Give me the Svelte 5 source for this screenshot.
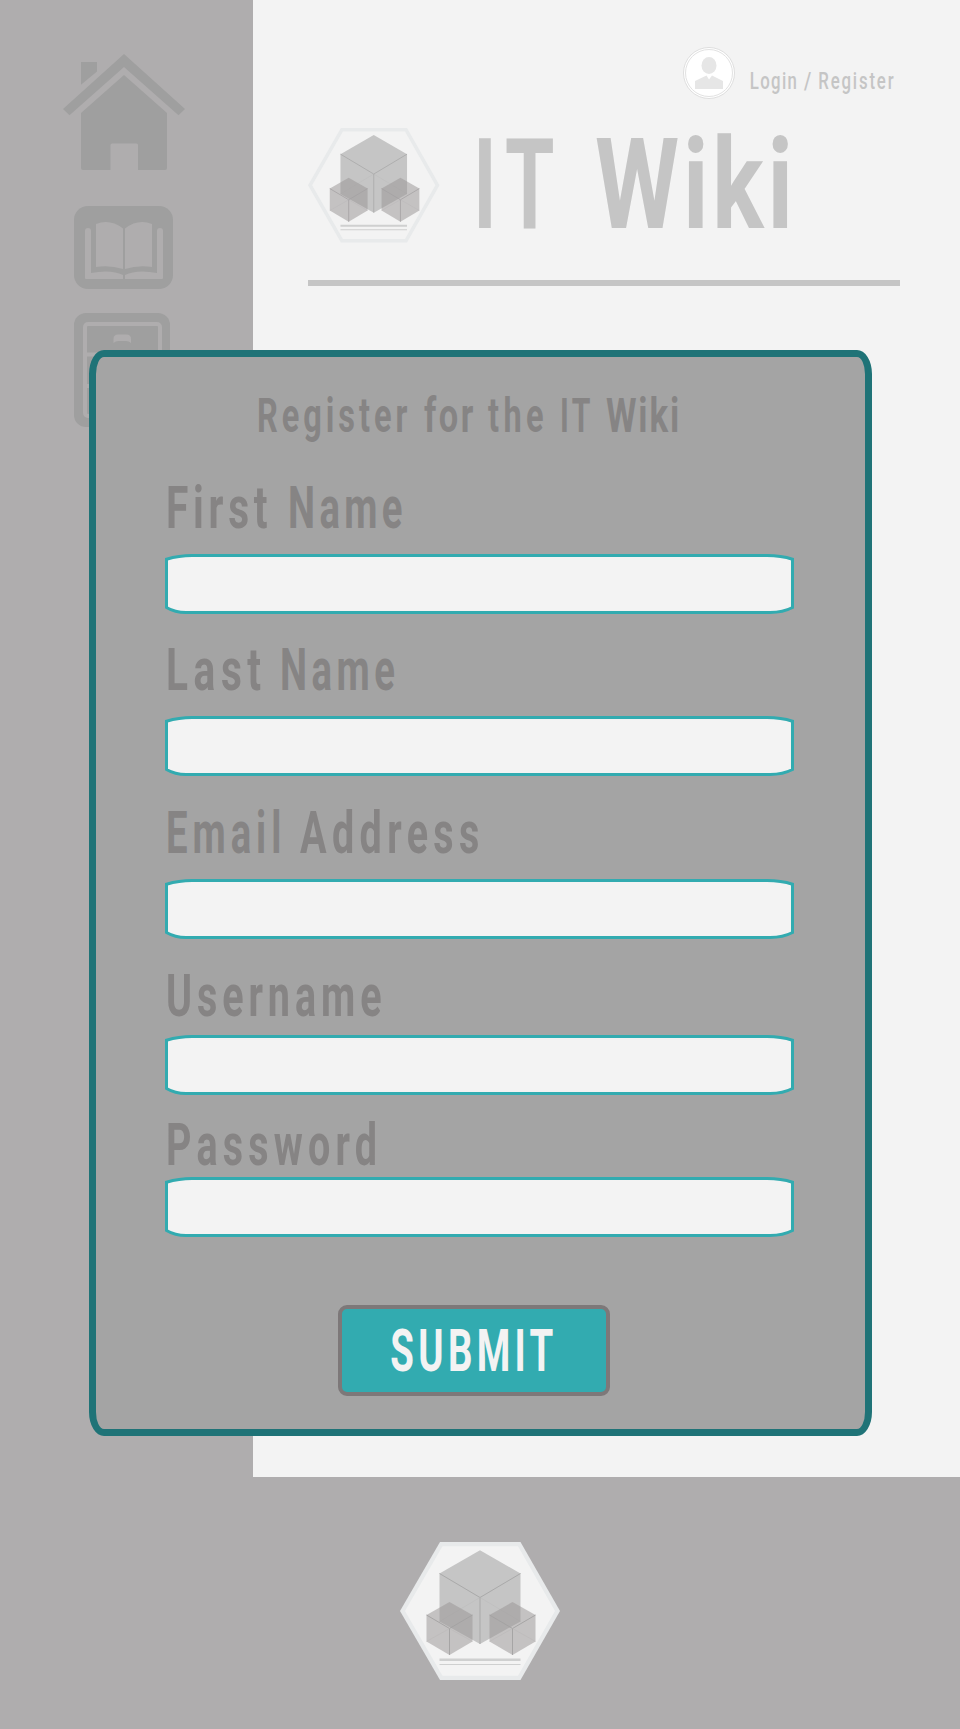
<script>
  // Condensed lettering: glyphs are narrowed and tracked out so each word fills its slot.
  const SQUEEZE = 0.65;
  const ctx = document.createElement('canvas').getContext('2d');

  function fit([text, x, width, squeeze = SQUEEZE], size, weight) {
    ctx.font = `${weight} ${size}px Roboto`;
    const m = ctx.measureText(text);
    const ink = m.actualBoundingBoxLeft + m.actualBoundingBoxRight;
    if (text.length === 1) {
      const scale = width / ink;
      return { text, scale, x: x / scale + m.actualBoundingBoxLeft, spacing: 0 };
    }
    return {
      text,
      scale: squeeze,
      x: x / squeeze + m.actualBoundingBoxLeft,
      spacing: (width / squeeze - ink) / (text.length - 1)
    };
  }

  const fields = [
    { id: 'first', type: 'text', height: 94, base: 68, words: [['First', 3, 99, 0.69], ['Name', 125, 112]] },
    { id: 'last', type: 'text', height: 102, base: 76, words: [['Last', 3, 92.5, 0.69], ['Name', 117, 112.5]] },
    { id: 'email', type: 'email', height: 103, base: 77, words: [['Email', 3, 111], ['Address', 135, 178.5, 0.67]] },
    { id: 'user', type: 'text', height: 96, base: 77, words: [['Username', 3, 213, 0.67]] },
    { id: 'pass', type: 'password', height: 82, base: 70, words: [['Password', 3, 207, 0.67]] }
  ];
  const title = [['IT', 0, 74, 0.63], ['Wiki', 117.5, 191.5, 0.76]];
  const login = [['Login', 0.5, 45.5, 0.7], ['/', 54, 7], ['Register', 69, 75, 0.7]];
  const heading = [
    ['Register', 94, 148, 0.68],
    ['for', 259, 49, 0.72],
    ['the', 323, 55, 0.68],
    ['IT', 397, 28, 0.63],
    ['Wiki', 441, 72, 0.73]
  ];
</script>

{#snippet lettering(words, size, width, height, base, weight = 700)}
  <svg class="lettering" {width} {height} font-size={size} font-weight={weight}>
    {#each words.map((w) => fit(w, size, weight)) as w}
      <text x={w.x} y={base} transform="scale({w.scale} 1)" letter-spacing={w.spacing}>{w.text}</text>
    {/each}
  </svg>
{/snippet}

{#snippet smallCube()}
  <path d="M49.5 60 72.5 73V99.5L49.5 113 26.5 99.5V73Z" fill="#9a9596" fill-opacity=".52" />
  <path d="M26.5 73 49.5 86.5 72.5 73M49.5 86.5V113" fill="none" stroke="#a3a1a2" stroke-width=".9" />
  <path d="M26.5 99.5 49.5 86.5 72.5 99.5" fill="none" stroke="#b5b3b4" stroke-width=".4" />
{/snippet}

{#snippet logo(width, height)}
  <svg {width} {height} viewBox="0 0 160 138" preserveAspectRatio="none">
    <path d="M40 0H120.5L160 69 120.5 138H40L0 69Z" fill="#e8eaeb" />
    <path d="M42.5 4.2H118L155 69 118 133.8H42.5L5 69Z" fill="#f3f3f3" />
    <path d="M80 8.3 120.5 31.5V79.5L80 102 39.5 79.5V31.5Z" fill="#c5c5c5" />
    <path d="M39.5 31.5 80 55.5 120.5 31.5M80 55.5V102" fill="none" stroke="#a6a6a6" stroke-width=".9" />
    <path d="M39.5 79.5 80 55.5 120.5 79.5" fill="none" stroke="#b8b8b8" stroke-width=".4" />
    {@render smallCube()}
    <g transform="translate(63 0)">{@render smallCube()}</g>
    <path d="M39.5 116.6h81v2.4h-81zM39.5 121.9h81v1.2h-81z" fill="#cfd0d0" />
  </svg>
{/snippet}

<div class="page">
  <nav class="sidebar">
    <svg class="home" width="122" height="116" viewBox="63 54 122 116">
      <path d="M124 54 185 109 178.5 115.3 124 67 69.5 115.3 63 109Z" />
      <path d="M81 62H97V71.5L81 84.7Z" />
      <path d="M124 75 167 113V168q0 2-2 2H138V145q0-1.500-1.500-1.500H112q-1.500 0-1.500 1.500V170H83q-2 0-2-2V113Z" />
    </svg>
    <svg class="book" width="99" height="83" viewBox="74 206 99 83">
      <rect x="74" y="206" width="99" height="83" rx="14" />
      <g fill="#afadae">
        <path d="M96 224Q110 218.500 123 228.500V269Q110 265 96 267Z" />
        <path d="M152 224Q138 218.500 125 228.500V269Q138 265 152 267Z" />
        <path d="M85 231q0-3 3-3t3 3V273Q111 269 123 275V279H86q-1 0-1-1Z" />
        <path d="M163 231q0-3-3-3t-3 3V273Q137 269 125 275V279H162q1 0 1-1Z" />
      </g>
    </svg>
    <svg class="drawers" width="96" height="114" viewBox="74 313 96 114">
      <rect x="74" y="313" width="96" height="114" rx="12" />
      <g fill="none" stroke="#afadae" stroke-width="4">
        <rect x="85" y="324" width="75" height="92" rx="3" />
        <path d="M85 354.500H160M85 386H160" />
      </g>
      <path d="M113.500 343V339q0-4.500 4.500-4.500H126.500q4.500 0 4.500 4.500V343q-2-2-5-2h-7.500q-3 0-5 2Z" fill="#afadae" />
    </svg>
  </nav>

  <main class="content">
    <div class="account">
      <svg width="52" height="52" viewBox="0 0 52 52">
        <circle cx="26" cy="26" r="25.500" fill="#fff" stroke="#dedede" />
        <circle cx="26" cy="26" r="23.500" fill="#fff" stroke="#e2e2e2" />
        <ellipse cx="26" cy="18.500" rx="7.500" ry="8.500" fill="#e6e6e6" />
        <path d="M12 42V34L23.500 28.500 26 32.500 29 28.500 40 34V42Z" fill="#e6e6e6" />
      </svg>
      {@render lettering(login, 24, 145, 52, 42, 500)}
    </div>
    <header class="brand">
      {@render logo(131.5, 114.5)}
      {@render lettering(title, 126.6, 310, 114, 100)}
    </header>
    <hr />
  </main>

  <footer>{@render logo(160, 138)}</footer>

  <form class="modal" onsubmit={(e) => e.preventDefault()}>
    {@render lettering(heading, 47.8, 629, 103, 75)}
    {#each fields as f}
      <label for={f.id}>{@render lettering(f.words, 59, 629, f.height, f.base)}</label>
      <div class="field">
        <svg width="629" height="60">
          <path d="M1.500 5.200Q14 1.500 27 1.500H602Q616 1.500 627.500 5.200V53.500Q618 58.500 605 58.500H21Q10 58.500 1.500 53.500Z" />
        </svg>
        <input id={f.id} type={f.type} />
      </div>
    {/each}
    <button type="submit">{@render lettering([['SUBMIT', 49, 162]], 59, 264, 83, 62)}</button>
  </form>
</div>

<style>
  :global(body) { margin: 0; }
  .page {
    position: relative;
    display: grid;
    grid-template: 1477px 252px / 253px 1fr;
    width: 960px;
    height: 1729px;
    overflow: hidden;
    background: #afadae;
  }
  svg { display: block; flex: none; }
  .lettering {
    overflow: visible;
    fill: currentColor;
    font-family: Roboto, sans-serif;
  }
  .sidebar {
    display: flex;
    flex-direction: column;
    align-items: flex-start;
    padding: 54px 0 0 63px;
    fill: #9f9f9f;
  }
  .book { margin: 36px 0 24px 11px; }
  .drawers { margin-left: 11px; }
  .content {
    background: #f3f3f3;
    color: #c5c5c5;
    padding: 47px 60px 0 55px;
  }
  .account {
    display: flex;
    justify-content: flex-end;
    gap: 15px;
    padding-right: 5px;
  }
  .brand {
    display: flex;
    gap: 39px;
    margin-top: 29px;
  }
  hr {
    height: 6px;
    margin: 37.5px 0 0;
    border: 0;
    background: #c5c5c5;
  }
  footer {
    grid-column: 1 / -1;
    display: flex;
    justify-content: center;
    padding-top: 65px;
  }
  .modal {
    position: absolute;
    left: 89px;
    top: 350px;
    box-sizing: border-box;
    width: 783px;
    height: 1086px;
    padding: 0 69px;
    border: 7px solid #1f7377;
    border-radius: 15px / 24px;
    background: #a4a4a4;
    color: #868484;
  }
  label { display: block; }
  .field { display: grid; }
  .field > * { grid-area: 1 / 1; }
  .field path {
    fill: #f3f3f3;
    stroke: #32abb0;
    stroke-width: 3;
  }
  input {
    margin: 4px 8px;
    padding: 0 12px;
    border: 0;
    background: none;
    font: 24px Roboto, sans-serif;
  }
  button {
    display: block;
    box-sizing: border-box;
    width: 272px;
    height: 91px;
    margin: 68px 0 0 173px;
    padding: 0;
    border: 4px solid #7d7879;
    border-radius: 9px;
    background: #32abb0;
    color: #f3f3f3;
  }
</style>
